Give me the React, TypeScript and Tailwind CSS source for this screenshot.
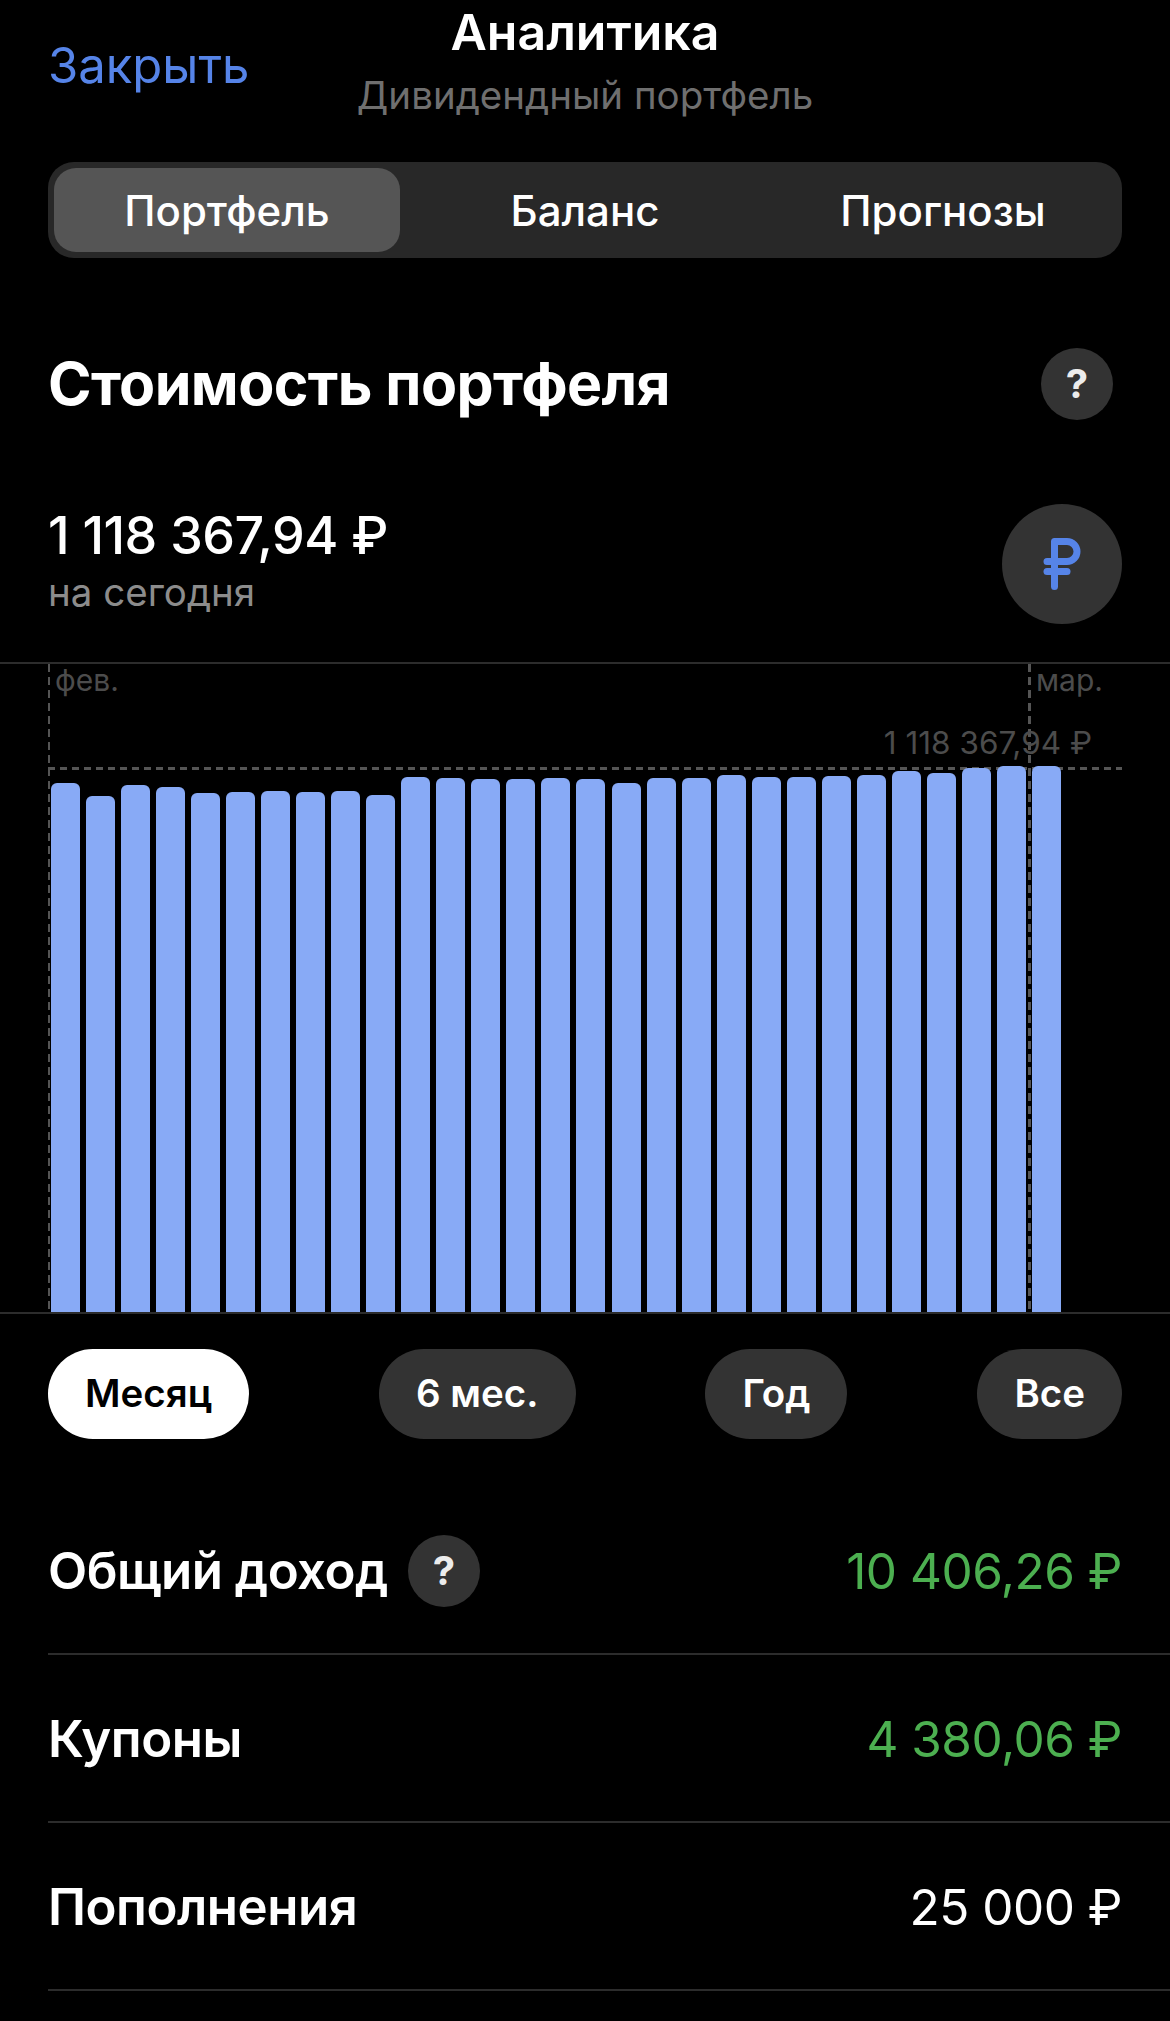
import { RussianRuble } from "lucide-react";

const barTops = [
  783, 796, 785, 787, 793, 792, 791, 792, 791, 795, 777, 778, 779, 779, 778,
  779, 783, 778, 778, 775, 777, 777, 776, 775, 771, 773, 768, 766, 766,
];
const chartBottom = 1312;

const ranges = ["Месяц", "6 мес.", "Год", "Все"];

function HelpButton() {
  return (
    <div className="flex h-[72px] w-[72px] shrink-0 items-center justify-center rounded-full bg-[#333333] text-[40px] font-bold text-[#ececec]">
      ?
    </div>
  );
}

function StatRow({
  label,
  value,
  valueClass,
  help,
}: {
  label: string;
  value: string;
  valueClass: string;
  help?: boolean;
}) {
  return (
    <div className="ml-[48px] flex h-[168px] items-center justify-between border-b-2 border-[#2c2c2c] pt-[2px] pr-[48px]">
      <div className="flex items-center gap-[20px]">
        <span className="text-[51px] font-semibold tracking-[-0.5px] text-white">{label}</span>
        {help && <HelpButton />}
      </div>
      <span className={`text-[49.5px] font-normal tracking-[-0.5px] ${valueClass}`}>{value}</span>
    </div>
  );
}

export default function App() {
  return (
    <div className="h-[2021px] w-[1170px] overflow-hidden bg-black font-['Inter','Liberation_Sans',sans-serif]">
      <header className="relative h-[162px]">
        <div className="flex flex-col items-center">
          <div className="mt-[2px] text-[50px] leading-[60px] font-semibold text-white">Аналитика</div>
          <div className="mt-[8px] text-[38.5px] leading-[50px] text-[#6f6f6f]">Дивидендный портфель</div>
        </div>
        <span className="absolute top-[36px] left-[48px] text-[49px] leading-[60px] text-[#5684e8]">Закрыть</span>
      </header>

      <div className="mx-[48px] flex h-[96px] items-center rounded-[26px] bg-[#282828] px-[6px] text-[42px] font-medium text-white">
        <div className="flex h-[84px] w-[346px] items-center justify-center rounded-[22px] bg-[#555555]">Портфель</div>
        <div className="flex h-[84px] flex-1 items-center justify-center">Баланс</div>
        <div className="flex h-[84px] w-[346px] items-center justify-center">Прогнозы</div>
      </div>

      <div className="mt-[90px] flex h-[72px] items-center justify-between pr-[57px] pl-[48px]">
        <h1 className="text-[59px] font-bold tracking-[-0.6px] text-white">Стоимость портфеля</h1>
        <HelpButton />
      </div>

      <div className="mt-[84px] flex h-[120px] items-center justify-between px-[48px]">
        <div className="-mt-[6px] flex flex-col">
          <span className="text-[52px] leading-[58px] font-medium tracking-[-0.5px] text-white">1 118 367,94 ₽</span>
          <span className="mt-[4px] text-[38.5px] leading-[46px] text-[#8c8c8c]">на сегодня</span>
        </div>
        <div className="flex h-[120px] w-[120px] items-center justify-center rounded-full bg-[#333333]">
          <RussianRuble size={60} strokeWidth={2.8} className="text-[#5684e8]" />
        </div>
      </div>

      <div className="relative mt-[38px] h-[652px] border-y-2 border-[#2c2c2c]">
        <div className="absolute top-0 left-[48px] h-full w-[2px] bg-[repeating-linear-gradient(180deg,#555555_0_8px,transparent_8px_13px)]" />
        <div className="absolute top-0 left-[1028px] h-full w-[3px] bg-[repeating-linear-gradient(180deg,#555555_0_8px,transparent_8px_13px)]" />
        <div className="absolute top-[103px] left-[48px] h-[3px] w-[1074px] bg-[repeating-linear-gradient(90deg,#555555_0_7px,transparent_7px_12px)]" />
        <span className="absolute top-[0px] left-[55px] text-[30px] leading-[32px] text-[#4c4c4c]">фев.</span>
        <span className="absolute top-[0px] left-[1036px] text-[30px] leading-[32px] text-[#4c4c4c]">мар.</span>
        <span className="absolute top-[61px] right-[78px] text-[31.5px] leading-[36px] text-[#4c4c4c]">1 118 367,94 ₽</span>
        <div className="absolute inset-x-0 bottom-0 flex items-end gap-[6.04px] pl-[51px]">
          {barTops.map((top, i) => (
            <div
              key={i}
              className="w-[29px] rounded-t-[6px] bg-[#88aaf6]"
              style={{ height: chartBottom - top }}
            />
          ))}
        </div>
      </div>

      <div className="mt-[35px] flex justify-between px-[48px]">
        {ranges.map((r, i) => (
          <div
            key={r}
            className={
              i === 0
                ? "flex h-[90px] items-center rounded-full bg-white px-[37px] text-[38.5px] font-semibold text-black"
                : "flex h-[90px] items-center rounded-full bg-[#333333] px-[37px] text-[38.5px] font-semibold text-white"
            }
          >
            {r}
          </div>
        ))}
      </div>

      <div className="mt-[48px]">
        <StatRow label="Общий доход" value="10 406,26 ₽" valueClass="text-[#4caf50]" help />
        <StatRow label="Купоны" value="4 380,06 ₽" valueClass="text-[#4caf50]" />
        <StatRow label="Пополнения" value="25 000 ₽" valueClass="text-white" />
      </div>
    </div>
  );
}
